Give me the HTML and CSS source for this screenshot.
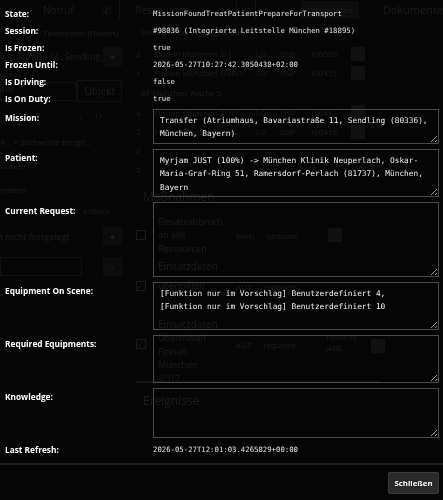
FILE: index.html
```html
<!DOCTYPE html>
<html>
<head>
<meta charset="utf-8"/>
<title>Fahrzeugdetails</title>
<link rel="stylesheet" href="styles.css">
</head>
<body>

<!-- page behind the dialog -->
<div class="page">
	<div class="nav">
		<div class="nav-call">Notruf <span class="ico">&#9990;</span></div>
		<div class="nav-res">Ressourcen</div>
		<div class="nav-ico">&#9636;</div>
		<div class="nav-ico">&#9636;</div>
		<div class="nav-disp">Disponieren</div>
		<div class="nav-doc">Dokumente</div>
	</div>
	<div class="cols">
		<div class="left">
			<div class="l-row l1">Teilnehmer (Dashin)</div>
			<div class="l-row l2"><span>variastraße 11, Sendling,</span><span class="box">&#9679;</span></div>
			<div class="l-row l3">chen)</div>
			<div class="l-row l4"><span class="sel">EIN</span><span class="btnbg">Objekt</span></div>
			<div class="l-row l5"><span>&#8964;</span><span>11</span></div>
			<div class="l-row l6">#... &times; Stichworte Ereign...</div>
			<div class="l-row l7">Datum</div>
			<div class="l-row l8">mation</div>
			<div class="l-row l9"><span class="ind">Kritisch</span></div>
			<div class="l-row l10"><span>t nicht festgelegt</span><span class="box">&#9679;</span></div>
			<div class="l-row l11"><span class="sel"></span><span class="box">+</span></div>
		</div>
		<div class="right">
			<div class="r-row r1">Einsatzmittel (4 ausgewählt)</div>
			<div class="r-row tr"><span>2</span><span class="w">Florian München 3/1</span><span>1/2</span><span>DSP</span><span>100526</span><span class="sq"></span></div>
			<div class="r-row tr"><span>1</span><span class="w">Florian München 1/40/1</span><span>1/2</span><span>DSP</span><span>100415</span><span class="sq"></span></div>
			<div class="r-row tr r2">BF München Wache 5</div>
			<div class="r-row tr t20"><span>4</span><span class="w">Florian München 3/1/1</span><span>1/2</span><span>DSP</span><span>100412</span><span class="sq"></span></div>
			<div class="r-row tr"><span>2</span><span class="w">Florian München 3/1/2</span><span>1/2</span><span>DSP</span><span>100416</span><span class="sq"></span></div>
			<div class="r-row tr"><span>2</span><span class="w"></span></div>
			<div class="r-row tr"><span>2</span><span class="w"></span></div>
			<div class="r-head h1">Maßnahmen</div>
			<div class="m-row m1"><span class="cb"></span><span class="mt">Einsatzabbruch<br>an alle<br>Ressourcen</span><span class="tag">MAN</span><span class="opt">optional</span><span class="sq"></span></div>
			<div class="r-row r3">Einsatzdaten</div>
			<div class="m-row m3"><span class="cb">&#10003;</span><span class="mt">übermittelt</span><span class="tag">AUT</span><span class="opt">required</span></div>
			<div class="r-row r4">Einsatzdaten</div>
			<div class="m-row m2"><span class="cb">&#10003;</span><span class="mt">Übermittelt<br>Florian München<br>3/1/2</span><span class="tag">AUT</span><span class="opt">required</span><span class="tm">10:04:15<br>JABE</span><span class="sq"></span></div>
			<div class="scroll"></div>
			<div class="r-head h2">Ereignisse</div>
		</div>
	</div>
</div>

<!-- dialog -->
<div class="modal">
	<div class="modal-body">
		<div class="row"><div class="lbl">State:</div><div class="val">MissionFoundTreatPatientPrepareForTransport</div></div>
		<div class="row"><div class="lbl">Session:</div><div class="val">#98036 (Integrierte Leitstelle München #18895)</div></div>
		<div class="row"><div class="lbl">Is Frozen:</div><div class="val">true</div></div>
		<div class="row"><div class="lbl">Frozen Until:</div><div class="val">2026-05-27T10:27:42.3050438+02:00</div></div>
		<div class="row"><div class="lbl">Is Driving:</div><div class="val">false</div></div>
		<div class="row"><div class="lbl">Is On Duty:</div><div class="val">true</div></div>
		<div class="row area"><div class="lbl">Mission:</div><textarea class="ta ta-mission" readonly>Transfer (Atriumhaus, Bavariastraße 11, Sendling (80336), München, Bayern)</textarea></div>
		<div class="row area"><div class="lbl">Patient:</div><textarea class="ta ta-patient" readonly>Myrjam JUST (100%) -> München Klinik Neuperlach, Oskar-Maria-Graf-Ring 51, Ramersdorf-Perlach (81737), München, Bayern</textarea></div>
		<div class="row area"><div class="lbl">Current Request:</div><textarea class="ta ta-request" readonly></textarea></div>
		<div class="row area"><div class="lbl">Equipment On Scene:</div><textarea class="ta ta-equip" readonly>[Funktion nur im Vorschlag] Benutzerdefiniert 4,
[Funktion nur im Vorschlag] Benutzerdefiniert 10</textarea></div>
		<div class="row area"><div class="lbl">Required Equipments:</div><textarea class="ta ta-req" readonly></textarea></div>
		<div class="row area"><div class="lbl">Knowledge:</div><textarea class="ta ta-know" readonly></textarea></div>
		<div class="row"><div class="lbl">Last Refresh:</div><div class="val">2026-05-27T12:01:03.4265829+00:00</div></div>
	</div>
	<div class="modal-footer"><button class="btn">Schließen</button></div>
</div>

</body>
</html>
```

FILE: styles.css
```css
body {
	margin: 0;
	background: #050505;
	font-family: "Open Sans", "Liberation Sans", sans-serif;
	width: 443px;
	height: 500px;
	overflow: hidden;
	position: relative;
}

/* page behind the dialog */
.page {
	color: #1e1e1e;
	font-size: 8px;
	height: 500px;
	overflow: hidden;
	filter: blur(0.4px);
}
.nav {
	display: flex;
	align-items: center;
	height: 19px;
}
.nav-call {
	margin-left: 33px;
	width: 95px;
	height: 19px;
	box-sizing: border-box;
	padding: 0 8px 0 10px;
	display: flex;
	align-items: center;
	justify-content: space-between;
	font-size: 10px;
	border-right: 1px solid #111;
}
.nav-res {
	margin-left: 15px;
	width: 112px;
	font-size: 10px;
}
.nav-ico {
	width: 20px;
	height: 19px;
	border-left: 1px solid #111;
	text-align: center;
	line-height: 19px;
}
.nav-disp {
	margin-left: 27px;
	background: #0d0d0d;
	padding: 3px 6px;
}
.nav-doc {
	margin-left: 24px;
	font-size: 11px;
	white-space: nowrap;
}
.cols {
	display: grid;
	grid-template-columns: 128px 1fr;
}
.left {
	display: flex;
	flex-direction: column;
}
.l-row {
	display: flex;
	align-items: center;
	justify-content: space-between;
	white-space: nowrap;
	overflow: hidden;
	padding-right: 6px;
}
.l1 { height: 26px; padding-left: 43px; }
.l2 { height: 22px; font-size: 9px; }
.l3 { height: 12px; }
.l4 { height: 24px; }
.l5 { height: 25px; justify-content: flex-start; gap: 10px; padding-left: 77px; }
.l6 { height: 27px; }
.l7 { height: 20px; }
.l8 { height: 28px; }
.l9 { height: 15px; }
.l10 { height: 36px; font-size: 9px; }
.l11 { height: 24px; }
.l-row .box {
	width: 19px;
	height: 19px;
	background: #0c0c0c;
	text-align: center;
	line-height: 19px;
}
.l-row .sel {
	width: 80px;
	height: 17px;
	border: 1px solid #111;
}
.l-row .btnbg {
	border: 1px solid #111;
	padding: 3px 6px;
	font-size: 10px;
}
.l-row .ind {
	padding-left: 83px;
}
.right {
	display: flex;
	flex-direction: column;
	padding-left: 8px;
}
.r-row {
	height: 19px;
	display: flex;
	align-items: center;
	white-space: nowrap;
	gap: 14px;
}
.r1 { height: 25px; padding-left: 5px; }
.r2 { padding-left: 5px; height: 20px; }
.t20 { height: 20px; }
.r3 { height: 14px; padding-left: 22px; font-size: 10px; }
.r4 { height: 14px; margin-top: 24px; padding-left: 22px; font-size: 10px; }
.tr .w { width: 86px; }
.tr .sq, .m-row .sq {
	width: 14px;
	height: 14px;
	background: #111;
}
.r-head {
	font-size: 12px;
	padding-left: 7px;
}
.h1 { height: 20px; line-height: 20px; margin-top: 8px; }
.h2 { height: 20px; line-height: 20px; margin-top: 8px; }
.m-row {
	display: flex;
	align-items: center;
	gap: 12px;
	font-size: 9px;
}
.m-row .cb {
	width: 8px;
	height: 8px;
	border: 1px solid #1c1c1c;
	font-size: 8px;
	line-height: 8px;
}
.m-row .mt {
	width: 66px;
	line-height: 13.5px;
}
.m-row .tag { font-size: 8px; }
.m-row .opt { width: 50px; font-size: 8px; }
.m-row .tm { width: 34px; font-size: 8px; line-height: 11px; }
.m1 { height: 48px; margin-top: 4px; }
.m3 { height: 14px; margin-top: 6px; }
.m2 {
	height: 42px;
	align-items: flex-start;
}
.m2 .cb, .m2 .tag, .m2 .opt, .m2 .sq {
	margin-top: 8px;
}
.scroll {
	height: 2px;
	width: 244px;
	background: #151515;
	margin-top: 8px;
}

/* dialog */
.modal {
	position: absolute;
	top: 0;
	left: 0;
	width: 443px;
	height: 500px;
	color: #fff;
}
.modal-body {
	padding: 5px 4px 5px 5px;
}
.row {
	display: grid;
	grid-template-columns: 148px 1fr;
	line-height: 17px;
}
.lbl {
	font-weight: bold;
	font-size: 8.3px;
	white-space: nowrap;
}
.val {
	font-family: "DejaVu Sans Mono", "Liberation Mono", monospace;
	font-size: 7.3px;
	color: #e6e6e6;
}
.row.area {
	padding: 2px 0 3px 0;
}
.ta {
	display: block;
	box-sizing: border-box;
	width: 100%;
	margin: 0;
	padding: 4px 6px;
	background: transparent;
	border: 1px solid #4a4a4a;
	border-radius: 0;
	color: #f2f2f2;
	font-family: "DejaVu Sans Mono", "Liberation Mono", monospace;
	font-size: 7.8px;
	line-height: 13.3px;
	overflow: hidden;
	resize: vertical;
	color-scheme: dark;
	outline: none;
}
.ta-mission { height: 35px; }
.ta-patient { height: 48px; }
.ta-request { height: 75px; }
.ta-equip { height: 48px; }
.ta-req { height: 48px; }
.ta-know { height: 50px; }

.modal-footer {
	border-top: 2px solid #1f1f1f;
	display: flex;
	justify-content: flex-end;
	padding: 7px 4px 0 0;
}
.btn {
	width: 51px;
	height: 22px;
	background: #2a2a2a;
	border: 1px solid #3c3c3c;
	border-radius: 2px;
	color: #fff;
	font-family: "Open Sans", "Liberation Sans", sans-serif;
	font-weight: bold;
	font-size: 7.8px;
	padding: 0;
}
```
